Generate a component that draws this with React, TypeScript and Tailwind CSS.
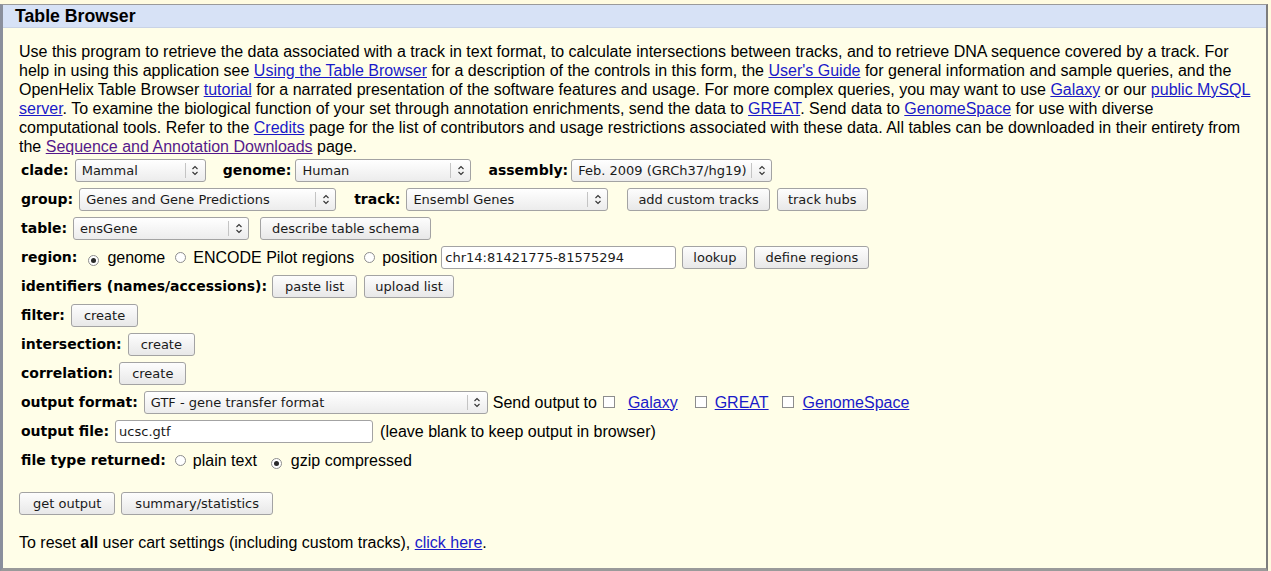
import React from 'react';

const ui = "font-['DejaVu_Sans',sans-serif] text-[13px] text-[#1a1a1a]";
const lbl = "font-['DejaVu_Sans',sans-serif] font-bold text-[14px] text-black";

const Arrows = () => (
  <svg width="8" height="11" viewBox="0 0 8 11" className="shrink-0">
    <path d="M1.5 4 L4 1.5 L6.5 4 M1.5 7 L4 9.5 L6.5 7" fill="none" stroke="#333" strokeWidth="1.1" />
  </svg>
);

const Select: React.FC<{ value: string; className: string }> = ({ value, className }) => (
  <div
    className={`flex h-[23px] items-center rounded-[3px] border border-[#a3a3a3] bg-linear-to-b from-white to-[#ececec] pl-[6px] ${ui} ${className}`}
  >
    <span className="flex-1 truncate">{value}</span>
    <span className="h-[15px] border-l border-[#c4c4c4]" />
    <span className="flex w-[19px] justify-center">
      <Arrows />
    </span>
  </div>
);

const Btn: React.FC<{ children: React.ReactNode; className?: string }> = ({ children, className = '' }) => (
  <button
    className={`h-[23px] rounded-[3px] border border-[#a3a3a3] bg-linear-to-b from-[#fdfdfd] to-[#e8e8e8] px-[10px] leading-none ${ui} ${className}`}
  >
    {children}
  </button>
);

const Radio: React.FC<{ on?: boolean }> = ({ on }) => (
  <span className="inline-flex h-[11px] w-[11px] items-center justify-center rounded-full border border-[#8d8d8d] bg-white">
    {on && <span className="h-[5px] w-[5px] rounded-full bg-[#2a2a2a]" />}
  </span>
);

const Check = () => <span className="-mt-[3px] inline-block h-[12px] w-[12px] border border-[#8d8d8d] bg-white align-middle" />;

const A: React.FC<{ children: React.ReactNode; visited?: boolean }> = ({ children, visited }) => (
  <a href="#" className={`underline ${visited ? 'text-[#551a8b]' : 'text-[#1a1ac8]'}`}>
    {children}
  </a>
);

const Row: React.FC<{ children: React.ReactNode }> = ({ children }) => (
  <div className="flex h-[29px] items-center">{children}</div>
);

export default function App() {
  return (
    <div className="h-[571px] w-[1271px] overflow-hidden bg-[#fffbe0] pt-[4px] font-['Liberation_Sans',Arial,sans-serif] text-[16px] text-black">
      <div className="h-[567px] w-[1268px] border-t border-r-[2px] border-b-[3px] border-l-[3px] border-t-[#9a9a9a] border-r-[#7d7d7d] border-b-[#9a9a9a] border-l-[#8a8f9c] bg-[#fffee8]">
        <div className="flex h-[23px] items-center border-b border-[#c9d3e6] bg-[#d7e2f6] pl-[12px]">
          <h1 className="pt-[1px] text-[17.7px] font-bold">Table Browser</h1>
        </div>

        <div className="pl-[16px] pr-[16px] pt-[14px]">
          <p className="w-[1233px] leading-[19px]">
            Use this program to retrieve the data associated with a track in text format, to calculate intersections
            between tracks, and to retrieve DNA sequence covered by a track. For help in using this application see{' '}
            <A>Using the Table Browser</A> for a description of the controls in this form, the <A>User's Guide</A> for
            general information and sample queries, and the OpenHelix Table Browser <A>tutorial</A> for a narrated
            presentation of the software features and usage. For more complex queries, you may want to use{' '}
            <A>Galaxy</A> or our <A>public MySQL server</A>. To examine the biological function of your set through
            annotation enrichments, send the data to <A>GREAT</A>. Send data to <A>GenomeSpace</A> for use with diverse
            computational tools. Refer to the <A>Credits</A> page for the list of contributors and usage restrictions
            associated with these data. All tables can be downloaded in their entirety from the{' '}
            <A visited>Sequence and Annotation Downloads</A> page.
          </p>

          <div className="pl-[2px]">
            <Row>
              <span className={lbl}>clade:</span>
              <Select value="Mammal" className="ml-[6px] w-[131px]" />
              <span className={`${lbl} ml-[17px]`}>genome:</span>
              <Select value="Human" className="ml-[4px] w-[176px]" />
              <span className={`${lbl} ml-[17px]`}>assembly:</span>
              <Select value="Feb. 2009 (GRCh37/hg19)" className="ml-[3px] w-[201px]" />
            </Row>
            <Row>
              <span className={lbl}>group:</span>
              <Select value="Genes and Gene Predictions" className="ml-[6px] w-[257px]" />
              <span className={`${lbl} ml-[18px]`}>track:</span>
              <Select value="Ensembl Genes" className="ml-[6px] w-[202px]" />
              <Btn className="ml-[19px]">add custom tracks</Btn>
              <Btn className="ml-[7px]">track hubs</Btn>
            </Row>
            <Row>
              <span className={lbl}>table:</span>
              <Select value="ensGene" className="ml-[6px] w-[176px]" />
              <Btn className="ml-[11px] px-[11px]">describe table schema</Btn>
            </Row>
            <Row>
              <span className={lbl}>region:</span>
              <span className="ml-[11px]"><Radio on /></span>
              <span className="ml-[8px]">genome</span>
              <span className="ml-[10px]"><Radio /></span>
              <span className="ml-[7px]">ENCODE Pilot regions</span>
              <span className="ml-[10px]"><Radio /></span>
              <span className="ml-[7px]">position</span>
              <div className={`ml-[4px] flex h-[23px] w-[235px] items-center rounded-[3px] border border-[#a3a3a3] bg-white pl-[3px] ${ui}`}>
                chr14:81421775-81575294
              </div>
              <Btn className="ml-[6px]">lookup</Btn>
              <Btn className="ml-[7px]">define regions</Btn>
            </Row>
            <Row>
              <span className={lbl}>identifiers (names/accessions):</span>
              <Btn className="ml-[5px] px-[12px]">paste list</Btn>
              <Btn className="ml-[7px]">upload list</Btn>
            </Row>
            <Row>
              <span className={lbl}>filter:</span>
              <Btn className="ml-[6px] px-[12px]">create</Btn>
            </Row>
            <Row>
              <span className={lbl}>intersection:</span>
              <Btn className="ml-[6px] px-[12px]">create</Btn>
            </Row>
            <Row>
              <span className={lbl}>correlation:</span>
              <Btn className="ml-[6px] px-[12px]">create</Btn>
            </Row>
            <Row>
              <span className={lbl}>output format:</span>
              <Select value="GTF - gene transfer format" className="ml-[6px] w-[344px]" />
              <span className="ml-[5px]">Send output to</span>
              <span className="ml-[6px]"><Check /></span>
              <span className="ml-[13px]"><A>Galaxy</A></span>
              <span className="ml-[17px]"><Check /></span>
              <span className="ml-[8px]"><A>GREAT</A></span>
              <span className="ml-[13px]"><Check /></span>
              <span className="ml-[9px]"><A>GenomeSpace</A></span>
            </Row>
            <Row>
              <span className={lbl}>output file:</span>
              <div className={`ml-[6px] flex h-[23px] w-[258px] items-center rounded-[3px] border border-[#a3a3a3] bg-white pl-[3px] ${ui}`}>
                ucsc.gtf
              </div>
              <span className="ml-[7px]">(leave blank to keep output in browser)</span>
            </Row>
            <Row>
              <span className={lbl}>file type returned:</span>
              <span className="ml-[9px]"><Radio /></span>
              <span className="ml-[7px]">plain text</span>
              <span className="ml-[14px]"><Radio on /></span>
              <span className="ml-[9px]">gzip compressed</span>
            </Row>
          </div>

          <div className="mt-[17px] flex items-center gap-[6px]">
            <Btn className="px-[13px]">get output</Btn>
            <Btn className="px-[13px]">summary/statistics</Btn>
          </div>

          <p className="mt-[16px]">
            To reset <b>all</b> user cart settings (including custom tracks), <A>click here</A>.
          </p>
        </div>
      </div>
    </div>
  );
}
